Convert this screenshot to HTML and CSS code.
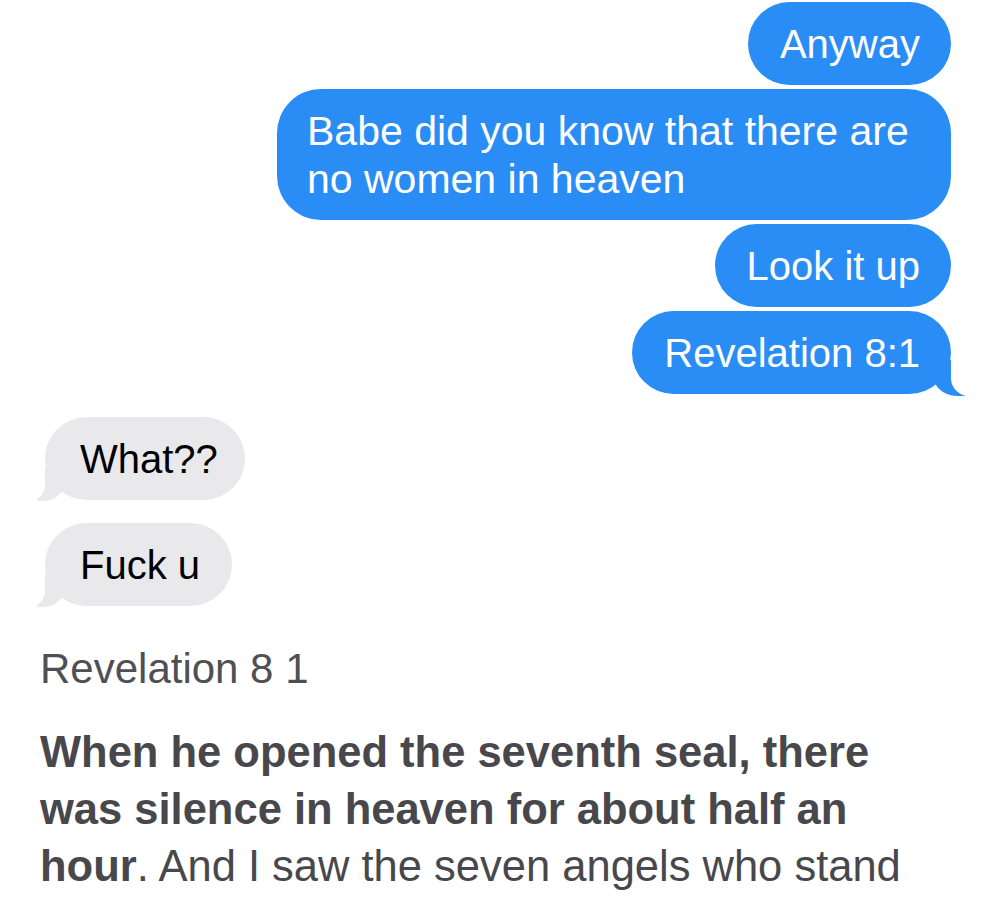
FILE: index.html
```html
<!DOCTYPE html>
<html>
<head>
<meta charset="utf-8">
<link rel="stylesheet" href="styles.css">
</head>
<body>
<div class="chat">
  <div class="bubble sent">Anyway</div>
  <div class="bubble sent wide">Babe did you know that there are no women in heaven</div>
  <div class="bubble sent">Look it up</div>
  <div class="bubble sent tail">Revelation 8:1</div>
  <div class="bubble recv tail first-recv narrow">What??</div>
  <div class="bubble recv tail">Fuck u</div>
</div>
<div class="verse">
  <div class="ref">Revelation 8 1</div>
  <p class="text"><strong>When he opened the seventh seal, there was silence in heaven for about half an hour</strong>. And I saw the seven angels who stand</p>
</div>
</body>
</html>
```
FILE: styles.css
```css
html, body {
  margin: 0;
  padding: 0;
  background: #ffffff;
  overflow: hidden;
}
body {
  width: 1000px;
  height: 898px;
  font-family: "Liberation Sans", Arial, sans-serif;
}
.chat {
  display: flex;
  flex-direction: column;
  gap: 4px;
  padding: 2px 49px 0 45px;
}
.bubble {
  position: relative;
  font-size: 40px;
  line-height: 48px;
  padding: 17.5px 31px 17.5px 32px;
  border-radius: 42px;
  box-sizing: border-box;
}
.sent {
  align-self: flex-end;
  background: #2a8df5;
  color: #ffffff;
}
.sent.wide {
  max-width: 674px;
  font-size: 41px;
  padding-left: 30px;
  border-radius: 44px;
}
.recv {
  align-self: flex-start;
  background: #e9e9eb;
  color: #000000;
  padding: 17.5px 32px 17.5px 35px;
}
.recv.narrow {
  padding-right: 27px;
}
.first-recv {
  margin-top: 19px;
}
.recv + .recv {
  margin-top: 19px;
}
.sent.tail::before {
  content: "";
  position: absolute;
  z-index: 0;
  bottom: -2px;
  right: -14px;
  width: 34px;
  height: 36px;
  background: #2a8df5;
  border-bottom-left-radius: 26px;
}
.sent.tail::after {
  content: "";
  position: absolute;
  z-index: 1;
  bottom: -2px;
  right: -24px;
  width: 24px;
  height: 38px;
  background: #ffffff;
  border-bottom-left-radius: 18px;
}
.recv.tail::before {
  content: "";
  position: absolute;
  z-index: 0;
  bottom: -1px;
  left: -8px;
  width: 30px;
  height: 34px;
  background: #e9e9eb;
  border-bottom-right-radius: 24px;
}
.recv.tail::after {
  content: "";
  position: absolute;
  z-index: 1;
  bottom: -1px;
  left: -22px;
  width: 22px;
  height: 36px;
  background: #ffffff;
  border-bottom-right-radius: 16px;
}
.verse {
  padding: 38px 0 0 40px;
  color: #48484c;
}
.ref {
  font-size: 42px;
  line-height: 50px;
  color: #505054;
}
.text {
  margin: 30px 0 0 0;
  width: 900px;
  font-size: 43.5px;
  line-height: 57px;
}
.text strong {
  font-weight: bold;
}
```
